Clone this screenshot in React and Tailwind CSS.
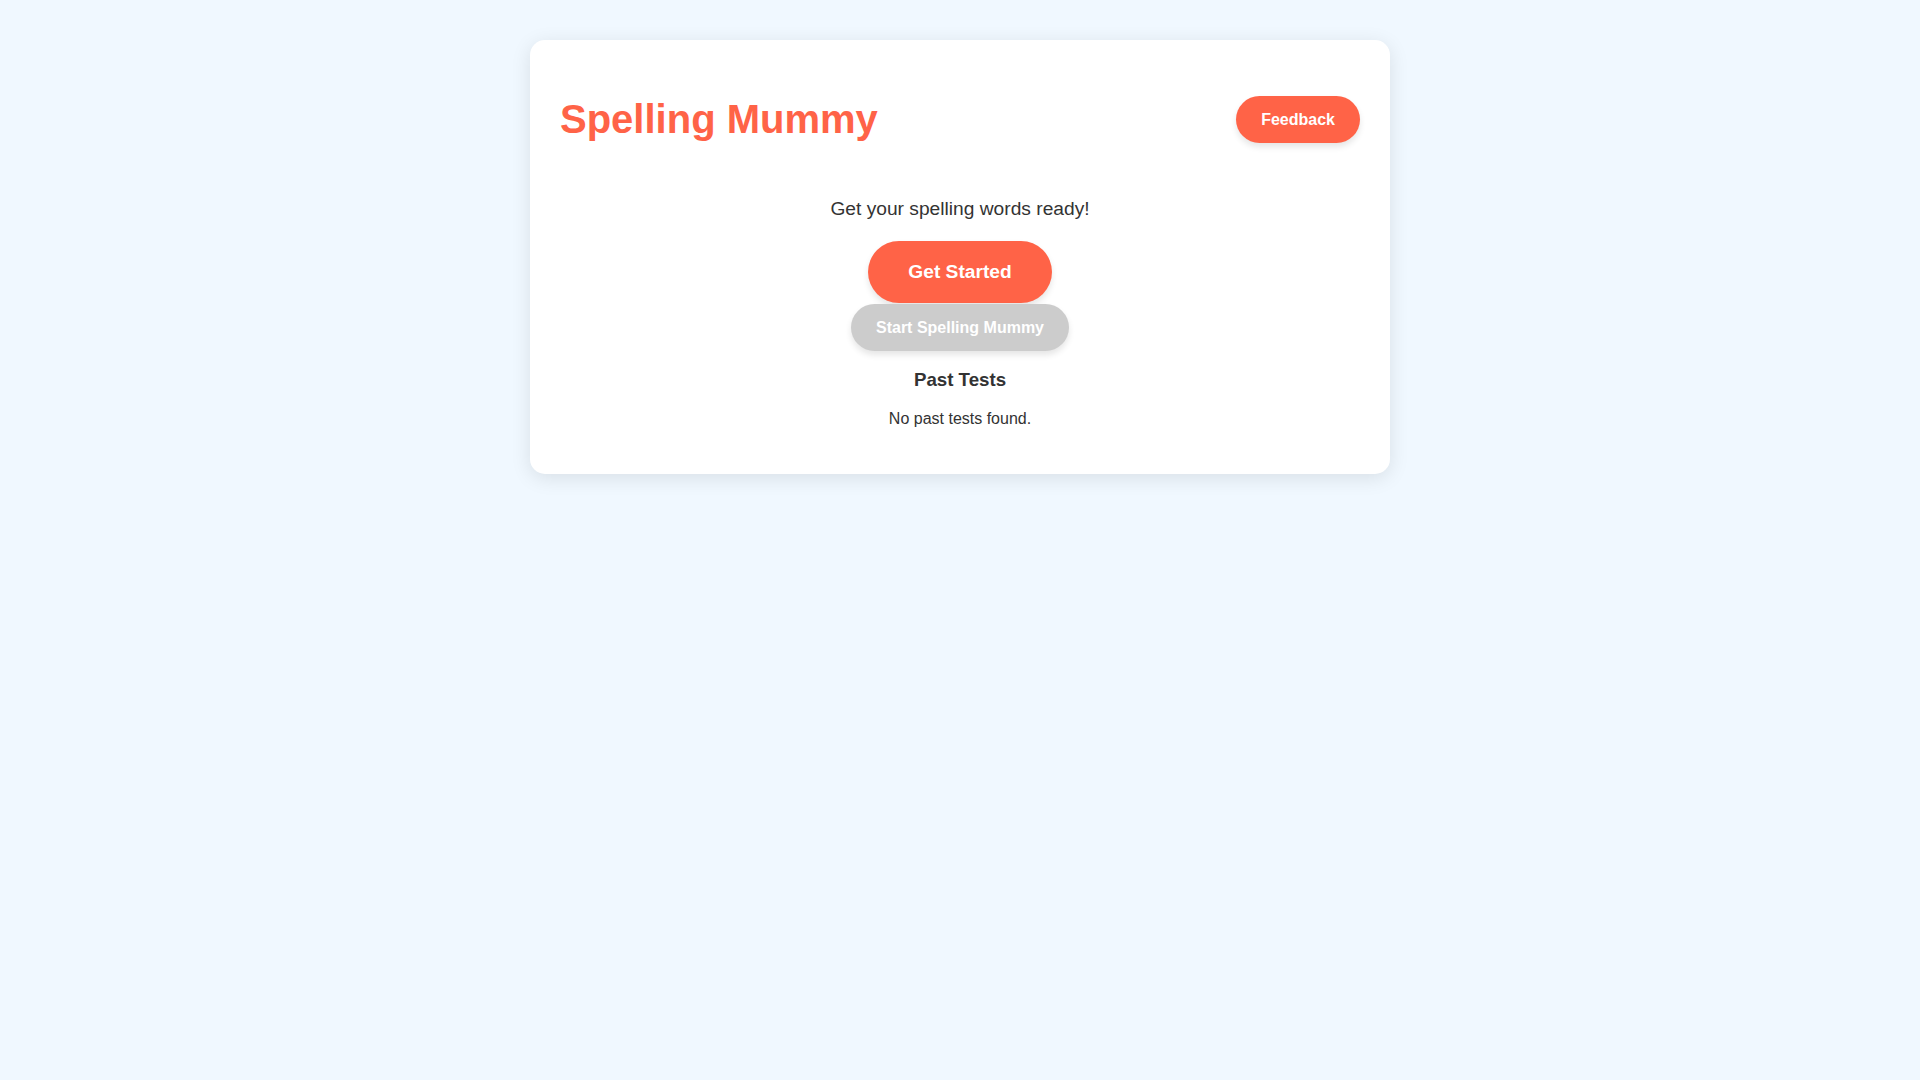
export default function App() {
  return (
    <div className="min-h-screen bg-[#f0f8ff] pt-10 font-['Liberation_Sans',Arial,sans-serif] text-[#333]">
      <div className="mx-auto w-[860px] rounded-[15px] bg-white p-[30px] shadow-[0_4px_20px_rgba(0,0,0,0.1)]">
        {/* Header */}
        <div className="flex items-center justify-between">
          <h1 className="mt-[25.8px] mb-[26.8px] text-[40px] font-bold leading-[46px] text-[#ff6347]">
            Spelling Mummy
          </h1>
          <button className="rounded-full bg-[#ff6347] px-[25px] py-[15px] text-base font-bold leading-[17.5px] text-white shadow-[0_4px_6px_rgba(0,0,0,0.1)]">
            Feedback
          </button>
        </div>

        {/* Main */}
        <div className="flex flex-col items-center text-center">
          <p className="mt-[29.4px] text-[19.2px] leading-[22px]">Get your spelling words ready!</p>
          <button className="mt-[21px] rounded-full bg-[#ff6347] px-10 py-5 text-[19.2px] font-bold leading-[22px] text-white shadow-[0_4px_6px_rgba(0,0,0,0.1)]">
            Get Started
          </button>
          <button className="mt-[0.7px] rounded-full bg-[#cccccc] px-[25px] py-[15px] text-base font-bold leading-[17px] text-white shadow-[0_4px_6px_rgba(0,0,0,0.1)]">
            Start Spelling Mummy
          </button>
          <h3 className="mt-[18.72px] text-[18.72px] font-bold leading-[22px]">Past Tests</h3>
          <p className="mt-[18.72px] mb-4 text-base leading-[18px]">No past tests found.</p>
        </div>
      </div>
    </div>
  );
}
